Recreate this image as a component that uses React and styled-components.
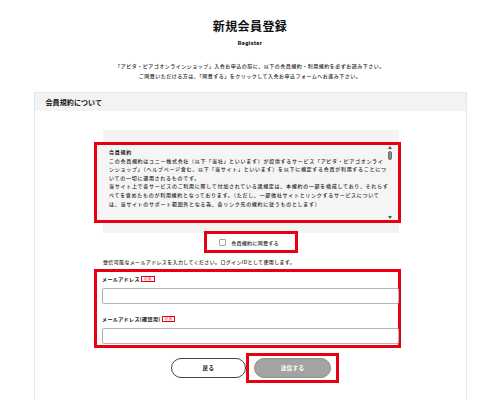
import React from "react";
import styled, { createGlobalStyle } from "styled-components";

const Global = createGlobalStyle`
  html, body { margin: 0; padding: 0; background: #fff; }
  body {
    font-family: "Noto Sans CJK JP", "Noto Sans", sans-serif;
    color: #222;
    width: 500px;
    height: 400px;
    overflow: hidden;
  }
  * { box-sizing: border-box; }
`;

const Page = styled.div`
  padding-top: 18px;
  display: flex;
  flex-direction: column;
  align-items: center;
`;

const Title = styled.h1`
  margin: 0;
  font-size: 12px;
  line-height: 16px;
  font-weight: 700;
  letter-spacing: 0.4px;
  color: #111;
`;

const Sub = styled.div`
  margin-top: 5px;
  font-family: "Roboto", "Noto Sans", sans-serif;
  font-size: 5.5px;
  line-height: 8px;
  font-weight: 900;
  letter-spacing: 0.4px;
  color: #111;
`;

const Intro = styled.p`
  margin: 14px 0 0;
  font-size: 5px;
  line-height: 10px;
  letter-spacing: 0.5px;
  text-align: center;
  color: #1e1e1e;
  font-weight: 500;
`;

const Panel = styled.section`
  margin-top: 11px;
  width: 433px;
  height: 320px;
  border: 1px solid #e6e6e6;
  border-bottom: none;
`;

const PanelHeader = styled.h2`
  margin: 0;
  height: 18px;
  background: #f3f3f3;
  padding-left: 11px;
  display: flex;
  align-items: center;
  font-size: 7px;
  font-weight: 700;
  letter-spacing: 0.1px;
  color: #111;
`;

const PanelBody = styled.div`
  padding-top: 19px;
  display: flex;
  justify-content: center;
`;

const Column = styled.div`
  width: 296px;
  margin-left: 2px;
  display: flex;
  flex-direction: column;
`;

const TermsBox = styled.div`
  background: #f3f3f3;
  padding: 12px 0 10px;
`;

const RedFrame = styled.div`
  border: 3px solid #e60012;
  margin-left: ${(p) => p.$left || 0}px;
  width: ${(p) => p.$width}px;
  height: ${(p) => p.$height}px;
`;

const TermsFrame = styled(RedFrame)`
  background: #f5f5f5;
  display: flex;
  justify-content: space-between;
`;

const TermsText = styled.div`
  padding: 3px 0 0 12px;
  font-size: 5px;
  line-height: 8.6px;
  letter-spacing: 0.72px;
  color: #1e1e1e;
  font-weight: 500;
  white-space: nowrap;
`;

const TermsTitle = styled.div`
  font-weight: 700;
  color: #111;
`;

const ScrollTrack = styled.div`
  width: 7px;
  margin-right: 6px;
  padding: 1px 0 1px;
  display: flex;
  flex-direction: column;
  align-items: center;
`;

const Thumb = styled.div`
  margin-top: 2px;
  width: 4px;
  height: 9px;
  border-radius: 2px;
  background: #8c8c8c;
  border: 1px solid #6f6f6f;
`;

const TrackSpacer = styled.div`
  flex: 1;
`;

const CheckFrame = styled(RedFrame)`
  align-self: center;
  margin-top: -2px;
  display: flex;
  align-items: center;
  justify-content: center;
  gap: 5px;
  padding-right: 4px;
`;

const CheckBox = styled.span`
  width: 7px;
  height: 7px;
  border: 1px solid #a5a5a5;
  background: #fff;
  border-radius: 1px;
`;

const CheckLabel = styled.span`
  font-size: 5px;
  letter-spacing: 0.3px;
  color: #1e1e1e;
  font-weight: 500;
`;

const Note = styled.p`
  margin: 5px 0 0;
  font-size: 5px;
  line-height: 8px;
  letter-spacing: 0.35px;
  color: #1e1e1e;
  font-weight: 500;
`;

const FieldFrame = styled(RedFrame)`
  margin-top: 3px;
  padding: 3px 0 0 5px;
  display: flex;
  flex-direction: column;
`;

const Label = styled.div`
  margin-top: ${(p) => p.$gap || 0}px;
  display: flex;
  align-items: center;
  gap: 1px;
  font-size: 5px;
  line-height: 8px;
  font-weight: 700;
  letter-spacing: 0.4px;
  color: #111;
`;

const Badge = styled.span`
  display: inline-flex;
  align-items: center;
  justify-content: center;
  height: 6px;
  padding: 0 2px;
  border: 1px solid #e60012;
  color: #e60012;
  font-size: 3.6px;
  font-weight: 400;
  letter-spacing: 0.3px;
  line-height: 1;
`;

const Input = styled.div`
  margin-top: 5px;
  height: 16px;
  width: 297px;
  border: 1px solid #b5b5b5;
  border-radius: 2px;
  background: #fff;
`;

const ButtonRow = styled.div`
  margin-top: 5px;
  padding-left: 8px;
  display: flex;
  align-items: center;
  justify-content: center;
`;

const Button = styled.div`
  width: ${(p) => p.$w}px;
  height: 20px;
  border-radius: 10px;
  display: flex;
  align-items: center;
  justify-content: center;
  font-size: 5.5px;
  font-weight: 700;
  letter-spacing: 0.4px;
  border: 1px solid ${(p) => (p.$primary ? "#8f8f8f" : "#444")};
  background: ${(p) => (p.$primary ? "#a3a3a3" : "#fff")};
  color: ${(p) => (p.$primary ? "#fff" : "#222")};
`;

const ButtonFrame = styled(RedFrame)`
  padding: 2px 5px;
  display: flex;
  align-items: center;
`;

const Arrow = ({ up }) => (
  <svg width="4" height="3" viewBox="0 0 4 3">
    <path d={up ? "M0 3 L2 0 L4 3 Z" : "M0 0 L2 3 L4 0 Z"} fill="#555" />
  </svg>
);

const termsLines = [
  "この会員規約はユニー株式会社（以下「当社」といいます）が提供するサービス「アピタ・ピアゴオンライ",
  "ンショップ」（ヘルプページ含む、以下「当サイト」といいます）を以下に規定する会員が利用することにつ",
  "いての一切に適用されるものです。",
  "当サイト上で各サービスのご利用に際して付加されている諸規定は、本規約の一部を構成しており、それらす",
  "べてを含めたものが利用規約となっております。（ただし、一部他社サイトとリンクするサービスについて",
  "は、当サイトのサポート範囲外となる為、各リンク先の規約に従うものとします）",
];

export default function App() {
  return (
    <>
      <Global />
      <Page>
        <Title>新規会員登録</Title>
        <Sub>Register</Sub>
        <Intro>
          「アピタ・ピアゴオンラインショップ」入会お申込の前に、以下の会員規約・利用規約を必ずお読み下さい。
          <br />
          ご同意いただける方は、「同意する」をクリックして入会お申込フォームへお進み下さい。
        </Intro>
        <Panel>
          <PanelHeader>会員規約について</PanelHeader>
          <PanelBody>
            <Column>
              <TermsBox>
                <TermsFrame $left={-9} $width={307} $height={81}>
                  <TermsText>
                    <TermsTitle>会員規約</TermsTitle>
                    {termsLines.map((l) => (
                      <div key={l}>{l}</div>
                    ))}
                  </TermsText>
                  <ScrollTrack>
                    <Arrow up />
                    <Thumb />
                    <TrackSpacer />
                    <Arrow />
                  </ScrollTrack>
                </TermsFrame>
              </TermsBox>
              <CheckFrame $width={94} $height={22}>
                <CheckBox />
                <CheckLabel>会員規約に同意する</CheckLabel>
              </CheckFrame>
              <Note>受信可能なメールアドレスを入力してください。ログインIDとして使用します。</Note>
              <FieldFrame $left={-9} $width={307} $height={79}>
                <Label>
                  メールアドレス<Badge>必須</Badge>
                </Label>
                <Input />
                <Label $gap={11}>
                  メールアドレス(確認用)<Badge>必須</Badge>
                </Label>
                <Input />
              </FieldFrame>
              <ButtonRow>
                <Button $w={75}>戻る</Button>
                <ButtonFrame $width={93} $height={30}>
                  <Button $w={77} $primary>
                    送信する
                  </Button>
                </ButtonFrame>
              </ButtonRow>
            </Column>
          </PanelBody>
        </Panel>
      </Page>
    </>
  );
}
